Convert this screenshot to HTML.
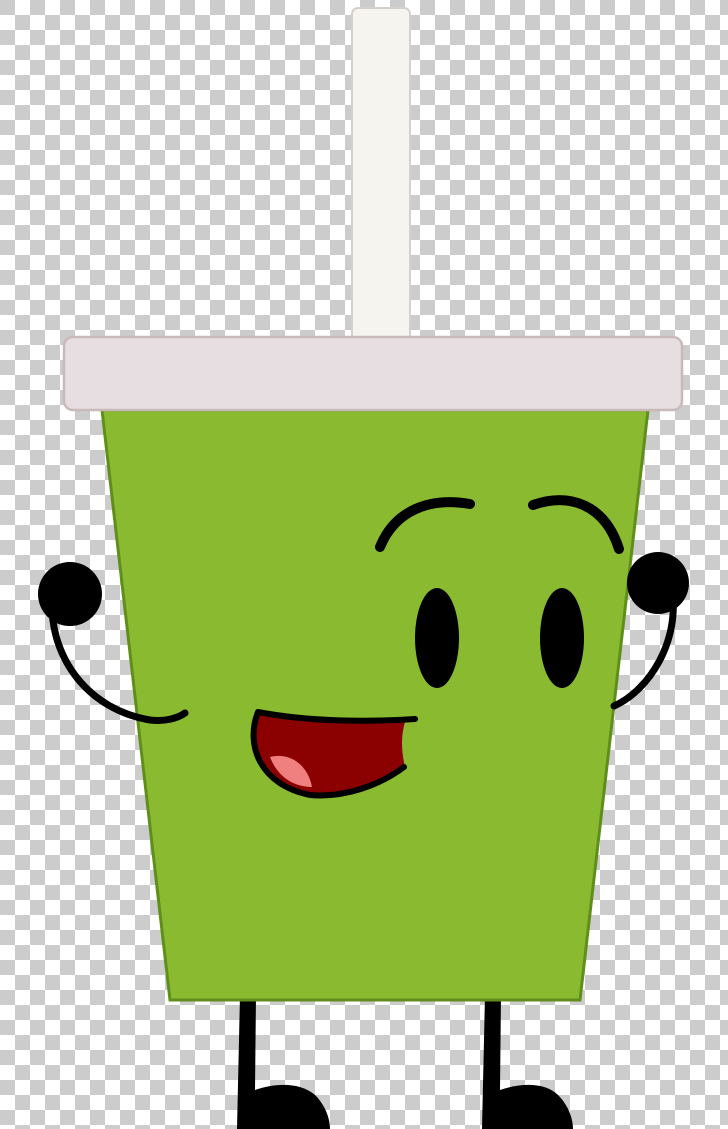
<!DOCTYPE html>
<html><head><style>
html,body{margin:0;padding:0;}
body{width:728px;height:1129px;overflow:hidden;background-color:#fff;
background-image:linear-gradient(45deg,#ccc 25%,transparent 25%,transparent 75%,#ccc 75%),linear-gradient(45deg,#ccc 25%,transparent 25%,transparent 75%,#ccc 75%);
background-size:30px 30px;background-position:15px 0,0 15px;}
svg{position:absolute;left:0;top:0}
</style></head><body>
<svg width="728" height="1129" viewBox="0 0 728 1129">
<rect x="352" y="8" width="58" height="335" rx="6" fill="#f5f4ef" stroke="#d6d0cc" stroke-width="2"/>
<path d="M240 995 L256 995 L255 1090 C275 1083 300 1082 315 1095 C325 1105 330 1118 330 1129 L237 1129 Z" fill="#000"/>
<path d="M485 995 L501 995 L500 1090 C520 1083 545 1082 558 1095 C568 1105 573 1118 573 1129 L482 1129 Z" fill="#000"/>
<path d="M102 410 L648 410 L580 1000 L170 1000 Z" fill="#8aba2f" stroke="#5f8f1a" stroke-width="3"/>
<rect x="64" y="337" width="618" height="73" rx="9" fill="#e6dee0" stroke="#c9b9b9" stroke-width="2.5"/>
<path d="M52 600 C50 660 90 710 150 720 C165 722 178 718 185 713" fill="none" stroke="#000" stroke-width="7" stroke-linecap="round"/>
<circle cx="70" cy="594" r="32" fill="#000"/>
<path d="M672 590 C680 640 650 690 614 706" fill="none" stroke="#000" stroke-width="7" stroke-linecap="round"/>
<circle cx="658" cy="583" r="31" fill="#000"/>
<ellipse cx="437" cy="638" rx="22" ry="50" fill="#000"/>
<ellipse cx="562" cy="638" rx="22" ry="50" fill="#000"/>
<path d="M380 547 C395 510 430 497 470 504" fill="none" stroke="#000" stroke-width="10" stroke-linecap="round"/>
<path d="M533 505 C570 492 605 505 619 549" fill="none" stroke="#000" stroke-width="10" stroke-linecap="round"/>
<path d="M258 712 C310 722 370 722 415 718 L405 722 C401 735 401 750 405 767 C370 792 330 800 300 793 C265 785 245 760 258 712Z" fill="#8b0000"/>
<path d="M270 757 C290 752 308 765 312 787 C295 787 278 778 270 757Z" fill="#f08080"/>
<path d="M415 719 C370 722 310 722 258 712 C245 745 260 785 310 795 C345 798 380 785 404 767" fill="none" stroke="#000" stroke-width="6" stroke-linecap="round" stroke-linejoin="round"/>
</svg>
</body></html>
